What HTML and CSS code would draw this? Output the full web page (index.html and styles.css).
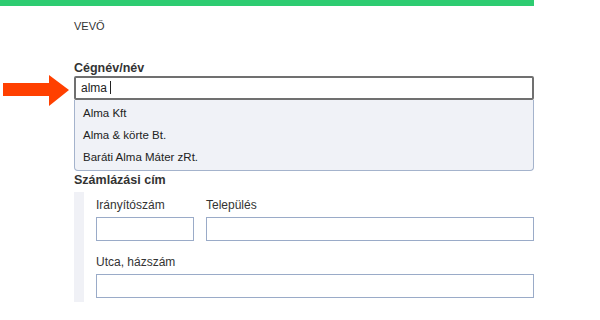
FILE: index.html
```html
<!DOCTYPE html>
<html lang="hu">
<head>
<meta charset="utf-8">
<title>Vevő</title>
<link rel="stylesheet" href="styles.css">
</head>
<body>
<div class="topbar"></div>
<main class="form">
  <div class="section-title">VEVŐ</div>
  <div class="field name-field">
    <label class="label-bold">Cégnév/név</label>
    <div class="combo">
      <svg class="arrow" width="68" height="32" viewBox="0 0 68 32"><polygon points="0,8 46,8 46,0 66,15 46,31 46,21 0,21" fill="#ff4000"/></svg>
      <div class="input active">alma <span class="caret"></span></div>
      <ul class="dropdown">
        <li>Alma Kft</li>
        <li>Alma &amp; körte Bt.</li>
        <li>Baráti Alma Máter zRt.</li>
      </ul>
    </div>
  </div>
  <div class="label-bold addr-title">Számlázási cím</div>
  <div class="addr">
    <div class="row">
      <div class="col zip">
        <label>Irányítószám</label>
        <div class="input"></div>
      </div>
      <div class="col city">
        <label>Település</label>
        <div class="input"></div>
      </div>
    </div>
    <div class="row">
      <div class="col street">
        <label>Utca, házszám</label>
        <div class="input"></div>
      </div>
    </div>
  </div>
</main>
</body>
</html>
```
FILE: styles.css
```css
* { box-sizing: border-box; }
body {
  margin: 0;
  background: #fff;
  font-family: "Liberation Sans", Arial, sans-serif;
  color: #333;
}
.topbar {
  width: 534px;
  height: 6px;
  background: #2ecc71;
}
.form {
  margin-left: 74px;
  width: 460px;
}
.section-title {
  font-size: 11px;
  margin-top: 13px;
  line-height: 14px;
}
.name-field { margin-top: 27px; }
.label-bold {
  display: block;
  font-weight: bold;
  font-size: 12.5px;
  line-height: 16px;
  color: #333;
}
.combo { position: relative; }
.arrow {
  position: absolute;
  left: -71px;
  top: -1px;
}
.input {
  height: 24px;
  border: 1px solid #9aabc8;
  background: #fff;
}
.input.active {
  border: 2px solid #707070;
  border-radius: 2px;
  font-size: 12px;
  line-height: 20px;
  padding-left: 5px;
  color: #222;
}
.caret {
  display: inline-block;
  width: 1px;
  height: 13px;
  background: #222;
  vertical-align: -2px;
}
.dropdown {
  list-style: none;
  margin: 0;
  padding: 2px 0 2px;
  background: #f0f2f7;
  border: 1px solid #a4b3cc;
  border-top: none;
  border-radius: 0 0 4px 4px;
  height: 71px;
}
.dropdown li {
  font-size: 11.5px;
  line-height: 22px;
  padding-left: 8px;
  color: #222;
}
.addr-title { margin-top: 1px; }
.addr {
  margin-top: 4px;
  border-left: 10px solid #f0f1f6;
  padding: 6px 0 4px 12px;
}
.row { display: flex; gap: 12px; }
.row + .row { margin-top: 14px; }
.col label {
  display: block;
  font-size: 12px;
  line-height: 15px;
  color: #333;
  margin-bottom: 4px;
}
.zip { width: 98px; }
.city { flex: 1; }
.street { flex: 1; }
```
